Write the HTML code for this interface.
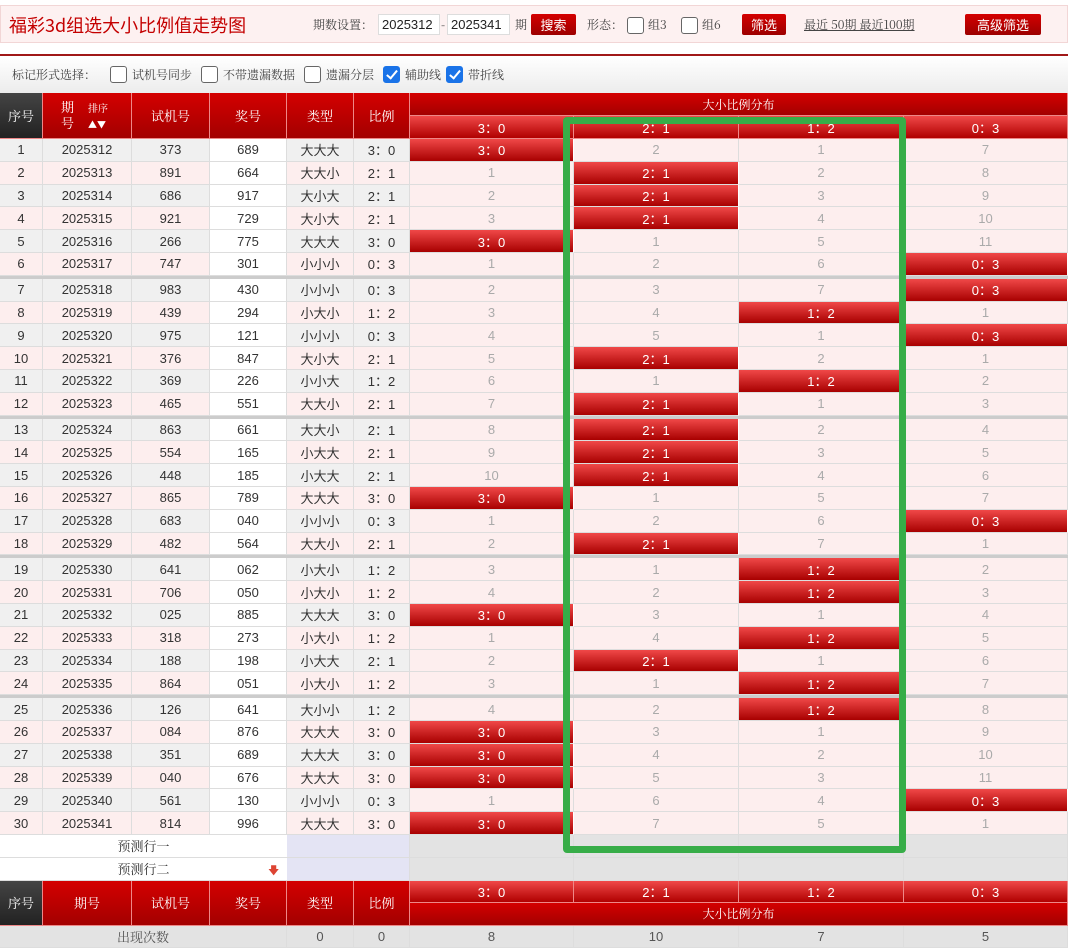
<!DOCTYPE html>
<html><head><meta charset="utf-8"><style>
*{box-sizing:border-box;margin:0;padding:0}
body{width:1080px;height:948px;overflow:hidden;background:#fff;font-family:"Liberation Sans","Noto Sans CJK SC",sans-serif;position:relative}
.top{position:absolute;left:0;top:5px;width:1068px;height:38px;background:#fdf1f1;border:1px solid #f2d6d6}
.title{position:absolute;left:8px;top:6px;font-family:"Noto Sans CJK SC",sans-serif;font-size:18px;color:#c40000}
.t{position:absolute;font-size:12px;color:#444;font-family:"Noto Serif CJK SC",serif}
.inp{position:absolute;top:8px;height:21px;background:#fff;border:1px solid #ddd;font-size:13px;color:#222;line-height:19px;padding-left:3px}
.btn{position:absolute;top:8px;height:21px;background:linear-gradient(#d40000,#9c0000);color:#fff;font-size:13px;line-height:21px;text-align:center;border-radius:2px;font-family:"Noto Sans CJK SC",sans-serif}
.cb{position:absolute;width:17px;height:17px;border:1px solid #666;border-radius:3px;background:#fff}
.cb.on{background:#1a73e8;border-color:#1a73e8}
.cb.on:after{content:"";position:absolute;left:5px;top:1px;width:4px;height:9px;border:solid #fff;border-width:0 2px 2px 0;transform:rotate(40deg)}
.line{position:absolute;left:0;top:54px;width:1068px;height:2px;background:#a01818}
.opt{position:absolute;left:0;top:56px;width:1068px;height:37px;background:linear-gradient(#fff,#ececec)}
table{position:absolute;left:0;top:93px;width:1068px;border-collapse:separate;border-spacing:0;table-layout:fixed}
td{padding:0;text-align:center;font-size:13px;color:#333;border-right:1px solid #ddd;border-bottom:1px solid #ddd;white-space:nowrap;overflow:hidden}
tr.d{height:22.8px}
tr.d td{background:#f0f0f0}
tr.d.p td{background:#fdeeee}
tr.d td.w{background:#fff}
tr.d td.g{background:#fdeeee;color:#aaa}
tr.d td.r{background:linear-gradient(#f04848,#a80000);color:#fff;border-right:1px solid #fff}
tr.sep td{height:3px;background:#ccc;border:0}
.h td{background:linear-gradient(#d40000,#a30000);color:#fff;font-weight:normal;font-family:"Noto Serif CJK SC",serif;border-right:1px solid #e88;border-bottom:1px solid #e88}
.h td.k{background:linear-gradient(#444,#222)}
.h td.s{background:linear-gradient(#f04848,#b00000);font-weight:normal;font-family:"Liberation Sans",sans-serif}
.pr td{background:#fff;height:23px;font-family:"Noto Serif CJK SC",serif}
.pr td.l{background:#e4e4f4}
.pr td.e{background:#e3e3e3}
.ft td{background:#e3e3e3;height:22px;color:#555}
.green{position:absolute;left:563px;top:117px;width:343px;height:736px;border:7px solid #37ad48;border-radius:4px}
</style></head><body>
<div class="top">
<div class="title">福彩3d组选大小比例值走势图</div>
<div class="t" style="left:312px;top:10px">期数设置：</div>
<div class="inp" style="left:377px;width:62px">2025312</div>
<div class="t" style="left:440px;top:10px">-</div>
<div class="inp" style="left:446px;width:63px">2025341</div>
<div class="t" style="left:514px;top:10px">期</div>
<div class="btn" style="left:530px;width:45px">搜索</div>
<div class="t" style="left:586px;top:10px">形态：</div>
<div class="cb" style="left:626px;top:11px"></div>
<div class="t" style="left:647px;top:10px">组3</div>
<div class="cb" style="left:680px;top:11px"></div>
<div class="t" style="left:701px;top:10px">组6</div>
<div class="btn" style="left:741px;width:44px">筛选</div>
<div class="t" style="left:803px;top:10px;text-decoration:underline">最近 50期 最近100期</div>
<div class="btn" style="left:964px;width:76px">高级筛选</div>
</div>
<div class="line"></div>
<div class="opt">
<div class="t" style="left:12px;top:10px">标记形式选择：</div>
<div class="cb" style="left:110px;top:10px"></div><div class="t" style="left:132px;top:10px">试机号同步</div>
<div class="cb" style="left:201px;top:10px"></div><div class="t" style="left:223px;top:10px">不带遗漏数据</div>
<div class="cb" style="left:304px;top:10px"></div><div class="t" style="left:326px;top:10px">遗漏分层</div>
<div class="cb on" style="left:383px;top:10px"></div><div class="t" style="left:405px;top:10px">辅助线</div>
<div class="cb on" style="left:446px;top:10px"></div><div class="t" style="left:468px;top:10px">带折线</div>
</div>
<table>
<colgroup><col style="width:43px"><col style="width:89px"><col style="width:78px"><col style="width:77px"><col style="width:67px"><col style="width:56px"><col style="width:164px"><col style="width:165px"><col style="width:165px"><col style="width:164px"></colgroup>
<tr class="h" style="height:23px"><td class="k" rowspan="2">序号</td><td rowspan="2" style="line-height:15px;text-align:left;padding-left:18px">期<span style="font-size:10px;margin-left:14px">排序</span><br>号<span style="font-size:9px;margin-left:14px">▲▼</span></td><td rowspan="2">试机号</td><td rowspan="2">奖号</td><td rowspan="2">类型</td><td rowspan="2">比例</td><td colspan="4" style="font-size:12px">大小比例分布</td></tr>
<tr class="h" style="height:23px"><td class="s">3：0</td><td class="s">2：1</td><td class="s">1：2</td><td class="s">0：3</td></tr>
<tr class="d"><td>1</td><td>2025312</td><td>373</td><td class="w">689</td><td>大大大</td><td>3：0</td><td class="r">3：0</td><td class="g">2</td><td class="g">1</td><td class="g">7</td></tr>
<tr class="d p"><td>2</td><td>2025313</td><td>891</td><td class="w">664</td><td>大大小</td><td>2：1</td><td class="g">1</td><td class="r">2：1</td><td class="g">2</td><td class="g">8</td></tr>
<tr class="d"><td>3</td><td>2025314</td><td>686</td><td class="w">917</td><td>大小大</td><td>2：1</td><td class="g">2</td><td class="r">2：1</td><td class="g">3</td><td class="g">9</td></tr>
<tr class="d p"><td>4</td><td>2025315</td><td>921</td><td class="w">729</td><td>大小大</td><td>2：1</td><td class="g">3</td><td class="r">2：1</td><td class="g">4</td><td class="g">10</td></tr>
<tr class="d"><td>5</td><td>2025316</td><td>266</td><td class="w">775</td><td>大大大</td><td>3：0</td><td class="r">3：0</td><td class="g">1</td><td class="g">5</td><td class="g">11</td></tr>
<tr class="d p"><td>6</td><td>2025317</td><td>747</td><td class="w">301</td><td>小小小</td><td>0：3</td><td class="g">1</td><td class="g">2</td><td class="g">6</td><td class="r">0：3</td></tr>
<tr class="sep"><td colspan="10"></td></tr>
<tr class="d"><td>7</td><td>2025318</td><td>983</td><td class="w">430</td><td>小小小</td><td>0：3</td><td class="g">2</td><td class="g">3</td><td class="g">7</td><td class="r">0：3</td></tr>
<tr class="d p"><td>8</td><td>2025319</td><td>439</td><td class="w">294</td><td>小大小</td><td>1：2</td><td class="g">3</td><td class="g">4</td><td class="r">1：2</td><td class="g">1</td></tr>
<tr class="d"><td>9</td><td>2025320</td><td>975</td><td class="w">121</td><td>小小小</td><td>0：3</td><td class="g">4</td><td class="g">5</td><td class="g">1</td><td class="r">0：3</td></tr>
<tr class="d p"><td>10</td><td>2025321</td><td>376</td><td class="w">847</td><td>大小大</td><td>2：1</td><td class="g">5</td><td class="r">2：1</td><td class="g">2</td><td class="g">1</td></tr>
<tr class="d"><td>11</td><td>2025322</td><td>369</td><td class="w">226</td><td>小小大</td><td>1：2</td><td class="g">6</td><td class="g">1</td><td class="r">1：2</td><td class="g">2</td></tr>
<tr class="d p"><td>12</td><td>2025323</td><td>465</td><td class="w">551</td><td>大大小</td><td>2：1</td><td class="g">7</td><td class="r">2：1</td><td class="g">1</td><td class="g">3</td></tr>
<tr class="sep"><td colspan="10"></td></tr>
<tr class="d"><td>13</td><td>2025324</td><td>863</td><td class="w">661</td><td>大大小</td><td>2：1</td><td class="g">8</td><td class="r">2：1</td><td class="g">2</td><td class="g">4</td></tr>
<tr class="d p"><td>14</td><td>2025325</td><td>554</td><td class="w">165</td><td>小大大</td><td>2：1</td><td class="g">9</td><td class="r">2：1</td><td class="g">3</td><td class="g">5</td></tr>
<tr class="d"><td>15</td><td>2025326</td><td>448</td><td class="w">185</td><td>小大大</td><td>2：1</td><td class="g">10</td><td class="r">2：1</td><td class="g">4</td><td class="g">6</td></tr>
<tr class="d p"><td>16</td><td>2025327</td><td>865</td><td class="w">789</td><td>大大大</td><td>3：0</td><td class="r">3：0</td><td class="g">1</td><td class="g">5</td><td class="g">7</td></tr>
<tr class="d"><td>17</td><td>2025328</td><td>683</td><td class="w">040</td><td>小小小</td><td>0：3</td><td class="g">1</td><td class="g">2</td><td class="g">6</td><td class="r">0：3</td></tr>
<tr class="d p"><td>18</td><td>2025329</td><td>482</td><td class="w">564</td><td>大大小</td><td>2：1</td><td class="g">2</td><td class="r">2：1</td><td class="g">7</td><td class="g">1</td></tr>
<tr class="sep"><td colspan="10"></td></tr>
<tr class="d"><td>19</td><td>2025330</td><td>641</td><td class="w">062</td><td>小大小</td><td>1：2</td><td class="g">3</td><td class="g">1</td><td class="r">1：2</td><td class="g">2</td></tr>
<tr class="d p"><td>20</td><td>2025331</td><td>706</td><td class="w">050</td><td>小大小</td><td>1：2</td><td class="g">4</td><td class="g">2</td><td class="r">1：2</td><td class="g">3</td></tr>
<tr class="d"><td>21</td><td>2025332</td><td>025</td><td class="w">885</td><td>大大大</td><td>3：0</td><td class="r">3：0</td><td class="g">3</td><td class="g">1</td><td class="g">4</td></tr>
<tr class="d p"><td>22</td><td>2025333</td><td>318</td><td class="w">273</td><td>小大小</td><td>1：2</td><td class="g">1</td><td class="g">4</td><td class="r">1：2</td><td class="g">5</td></tr>
<tr class="d"><td>23</td><td>2025334</td><td>188</td><td class="w">198</td><td>小大大</td><td>2：1</td><td class="g">2</td><td class="r">2：1</td><td class="g">1</td><td class="g">6</td></tr>
<tr class="d p"><td>24</td><td>2025335</td><td>864</td><td class="w">051</td><td>小大小</td><td>1：2</td><td class="g">3</td><td class="g">1</td><td class="r">1：2</td><td class="g">7</td></tr>
<tr class="sep"><td colspan="10"></td></tr>
<tr class="d"><td>25</td><td>2025336</td><td>126</td><td class="w">641</td><td>大小小</td><td>1：2</td><td class="g">4</td><td class="g">2</td><td class="r">1：2</td><td class="g">8</td></tr>
<tr class="d p"><td>26</td><td>2025337</td><td>084</td><td class="w">876</td><td>大大大</td><td>3：0</td><td class="r">3：0</td><td class="g">3</td><td class="g">1</td><td class="g">9</td></tr>
<tr class="d"><td>27</td><td>2025338</td><td>351</td><td class="w">689</td><td>大大大</td><td>3：0</td><td class="r">3：0</td><td class="g">4</td><td class="g">2</td><td class="g">10</td></tr>
<tr class="d p"><td>28</td><td>2025339</td><td>040</td><td class="w">676</td><td>大大大</td><td>3：0</td><td class="r">3：0</td><td class="g">5</td><td class="g">3</td><td class="g">11</td></tr>
<tr class="d"><td>29</td><td>2025340</td><td>561</td><td class="w">130</td><td>小小小</td><td>0：3</td><td class="g">1</td><td class="g">6</td><td class="g">4</td><td class="r">0：3</td></tr>
<tr class="d p"><td>30</td><td>2025341</td><td>814</td><td class="w">996</td><td>大大大</td><td>3：0</td><td class="r">3：0</td><td class="g">7</td><td class="g">5</td><td class="g">1</td></tr>
<tr class="pr"><td colspan="4" style="border-right:0">预测行一</td><td colspan="2" class="l"></td><td class="e"></td><td class="e"></td><td class="e"></td><td class="e"></td></tr>
<tr class="pr"><td colspan="4" style="border-right:0;position:relative">预测行二<span style="color:#d43;font-size:11px;position:absolute;left:268px;top:4px">🡇</span></td><td colspan="2" class="l"></td><td class="e"></td><td class="e"></td><td class="e"></td><td class="e"></td></tr>
<tr class="h" style="height:22px"><td class="k" rowspan="2">序号</td><td rowspan="2">期号</td><td rowspan="2">试机号</td><td rowspan="2">奖号</td><td rowspan="2">类型</td><td rowspan="2">比例</td><td class="s">3：0</td><td class="s">2：1</td><td class="s">1：2</td><td class="s">0：3</td></tr>
<tr class="h" style="height:23px"><td colspan="4" style="font-size:12px">大小比例分布</td></tr>
<tr class="ft"><td colspan="4" style="font-family:'Noto Serif CJK SC',serif">出现次数</td><td>0</td><td>0</td><td>8</td><td>10</td><td>7</td><td>5</td></tr>
</table>
<div class="green"></div>
</body></html>
